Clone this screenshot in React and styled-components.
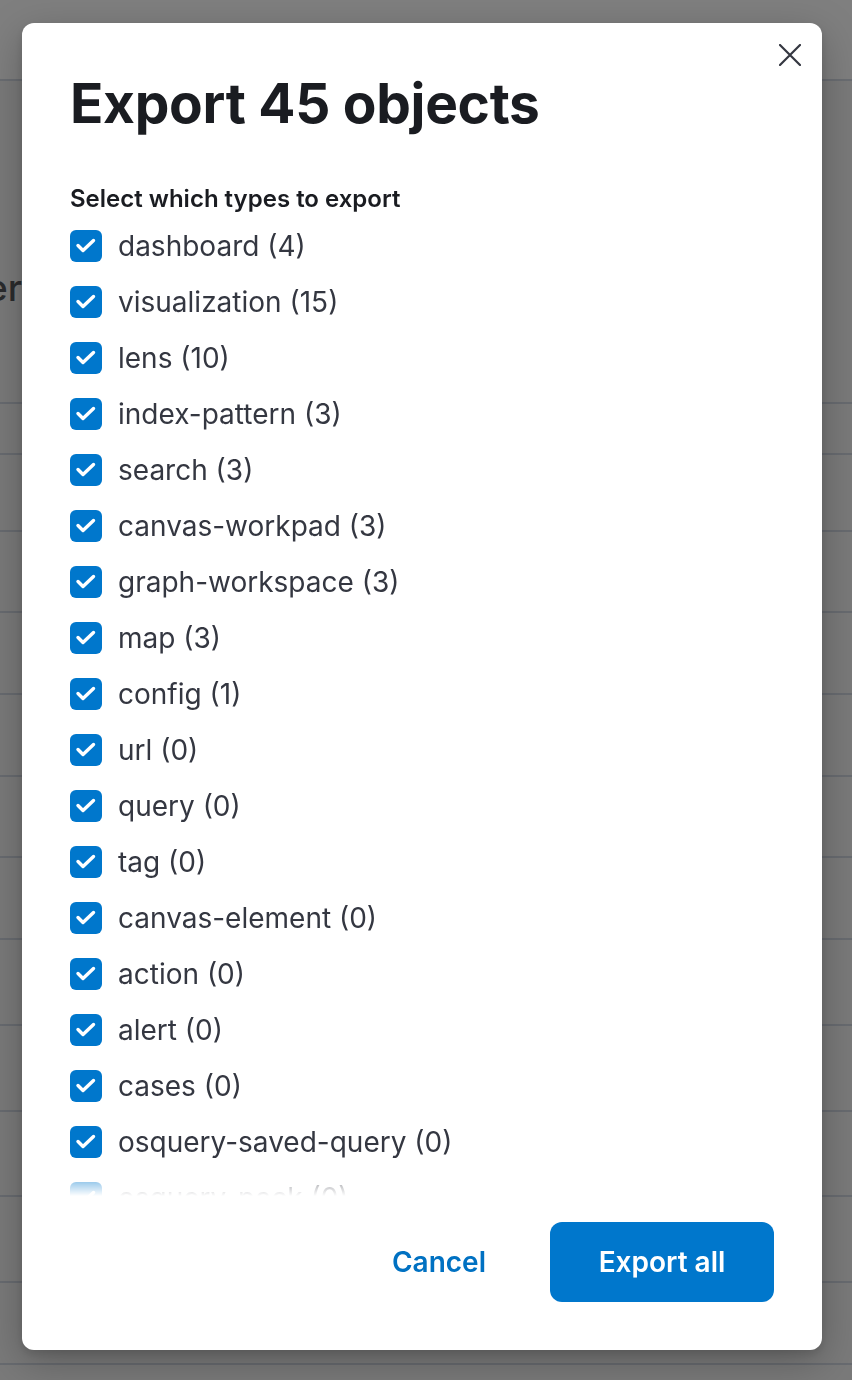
import React, { useState } from "react";
import styled, { createGlobalStyle } from "styled-components";

const GlobalStyle = createGlobalStyle`
    html, body {
        margin: 0;
        padding: 0;
        background: #7a7a7a;
    }
    body {
        font-family: Inter, "Noto Sans", sans-serif;
        -webkit-font-smoothing: antialiased;
    }
`

const types = [
    { id: 'dashboard', count: 4 },
    { id: 'visualization', count: 15 },
    { id: 'lens', count: 10 },
    { id: 'index-pattern', count: 3 },
    { id: 'search', count: 3 },
    { id: 'canvas-workpad', count: 3 },
    { id: 'graph-workspace', count: 3 },
    { id: 'map', count: 3 },
    { id: 'config', count: 1 },
    { id: 'url', count: 0 },
    { id: 'query', count: 0 },
    { id: 'tag', count: 0 },
    { id: 'canvas-element', count: 0 },
    { id: 'action', count: 0 },
    { id: 'alert', count: 0 },
    { id: 'cases', count: 0 },
    { id: 'osquery-saved-query', count: 0 },
    { id: 'osquery-pack', count: 0 },
    { id: 'osquery-pack-asset', count: 0 },
]

// heights of the table rows behind the overlay
const bgRows = [51, 77, 81, 82, 82, 81, 82, 86, 86, 85, 86, 82, 82]

const CheckIcon = () => (
    <svg width="32" height="32" viewBox="0 0 32 32" fill="none">
        <path d="M8 15.5 L13 20.5 L23.5 10.5" stroke="#fff" strokeWidth="3.4" strokeLinecap="round" strokeLinejoin="round" />
    </svg>
)

const CrossIcon = () => (
    <svg width="22" height="22" viewBox="0 0 22 22" fill="none">
        <path d="M1 1 L21 21 M21 1 L1 21" stroke="#343741" strokeWidth="2.2" strokeLinecap="round" />
    </svg>
)

export default function App() {
    const [checked, setChecked] = useState(types.map(() => true));

    const toggle = (index) => {
        setChecked(checked.map((c, i) => (i === index ? !c : c)));
    }

    return (
        <>
            <GlobalStyle />
            <Page>
                <PageHeader />
                <PageTitle>
                    <span>Saved objects manager</span>
                </PageTitle>
                <Table>
                    {bgRows.map((h, i) => (
                        <TableRow key={i} $height={h} />
                    ))}
                </Table>
            </Page>

            <Overlay>
                <Modal>
                    <CloseButton aria-label="Close">
                        <CrossIcon />
                    </CloseButton>
                    <Title>Export 45 objects</Title>
                    <Label>Select which types to export</Label>
                    <List>
                        {types.map((item, index) => (
                            <Row key={item.id} onClick={() => toggle(index)}>
                                <Box $on={checked[index]}>
                                    {checked[index] && <CheckIcon />}
                                </Box>
                                <RowText>{item.id} ({item.count})</RowText>
                            </Row>
                        ))}
                    </List>
                    <Footer>
                        <EmptyButton>Cancel</EmptyButton>
                        <PrimaryButton>Export all</PrimaryButton>
                    </Footer>
                </Modal>
            </Overlay>
        </>
    )
}

const Page = styled.div`
    min-height: 1380px;
    background: #7a7a7a;
`

const PageHeader = styled.div`
    height: 79px;
    background: #7f7f7f;
    border-bottom: 2px solid #6a6d72;
`

const PageTitle = styled.div`
    height: 321px;
    display: flex;
    justify-content: flex-end;
    width: 22px;
    overflow: hidden;
    span {
        margin-top: 184px;
        white-space: nowrap;
        font-size: 37px;
        font-weight: 500;
        color: #2a2b2d;
    }
`

const Table = styled.div`
    display: flex;
    flex-direction: column;
`

const TableRow = styled.div`
    height: ${p => p.$height - 2}px;
    border-top: 2px solid #686b70;
`

const Overlay = styled.div`
    position: fixed;
    inset: 0;
    padding: 23px 30px 0 22px;
`

const Modal = styled.div`
    position: relative;
    width: 800px;
    box-sizing: border-box;
    background: #fff;
    border-radius: 12px;
    padding: 47px 48px 48px;
    box-shadow: 0 12px 40px rgba(0, 0, 0, 0.25), 0 4px 10px rgba(0, 0, 0, 0.12);
`

const CloseButton = styled.button`
    position: absolute;
    top: 21px;
    right: 21px;
    width: 22px;
    height: 22px;
    padding: 0;
    border: none;
    background: none;
    cursor: pointer;
    display: flex;
`

const Title = styled.h2`
    margin: 0 0 46px;
    font-size: 55px;
    line-height: 66px;
    font-weight: 700;
    color: #1a1c21;
    letter-spacing: -0.3px;
`

const Label = styled.div`
    font-size: 24px;
    line-height: 33px;
    font-weight: 600;
    color: #1a1c21;
    margin-bottom: 3px;
`

const List = styled.div`
    height: 978px;
    overflow: hidden;
    -webkit-mask-image: linear-gradient(to bottom, #000 calc(100% - 36px), transparent 100%);
    mask-image: linear-gradient(to bottom, #000 calc(100% - 36px), transparent 100%);
`

const Row = styled.label`
    height: 56px;
    display: flex;
    align-items: center;
    gap: 16px;
    cursor: pointer;
`

const Box = styled.span`
    width: 32px;
    height: 32px;
    flex-shrink: 0;
    border-radius: 6px;
    display: flex;
    background: ${p => (p.$on ? '#0077cc' : '#fff')};
    border: ${p => (p.$on ? 'none' : '2px solid #c9cbcd')};
    box-sizing: border-box;
`

const RowText = styled.span`
    font-size: 28px;
    color: #343741;
    line-height: 40px;
`

const Footer = styled.div`
    margin-top: 26px;
    display: flex;
    justify-content: flex-end;
    align-items: center;
    gap: 40px;
`

const EmptyButton = styled.button`
    border: none;
    background: none;
    padding: 0 24px;
    height: 80px;
    font-family: inherit;
    font-size: 28px;
    font-weight: 600;
    color: #0071c2;
    cursor: pointer;
`

const PrimaryButton = styled.button`
    border: none;
    min-width: 224px;
    height: 80px;
    border-radius: 12px;
    background: #0077cc;
    color: #fff;
    font-family: inherit;
    font-size: 28px;
    font-weight: 600;
    padding: 0 48px;
    cursor: pointer;
`
